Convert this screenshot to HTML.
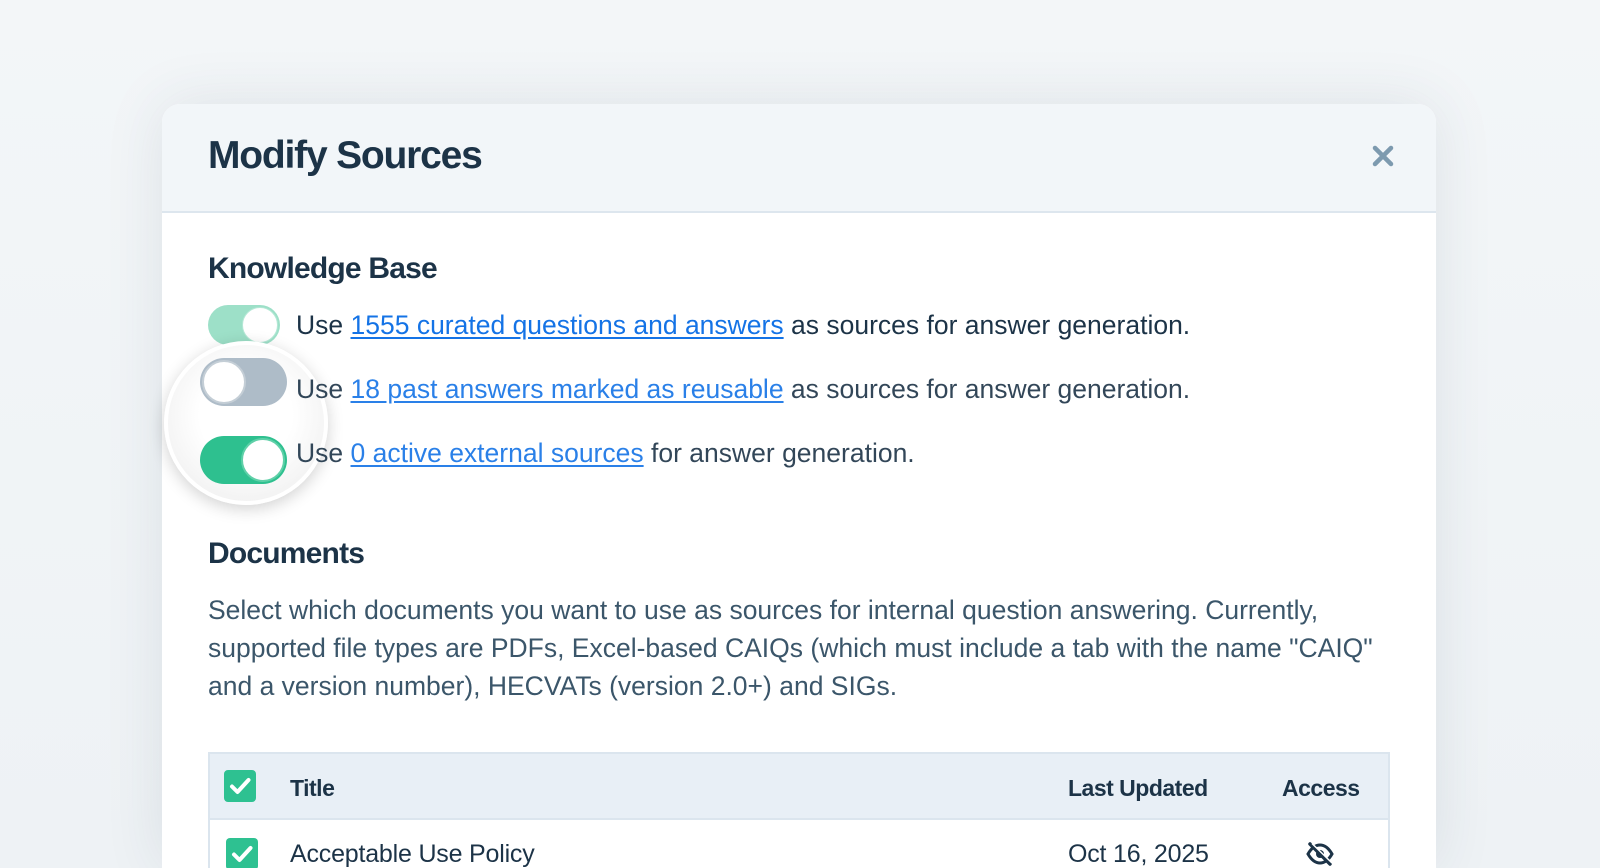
<!DOCTYPE html>
<html><head><meta charset="utf-8"><style>
*{box-sizing:border-box;margin:0;padding:0}
html,body{width:1600px;height:868px;overflow:hidden}
body{background:linear-gradient(180deg,#f3f6f8 0%,#eef2f5 100%);font-family:"Liberation Sans",Arial,sans-serif;color:#1c3347;position:relative}
.modal{position:absolute;left:162px;top:104px;width:1274px;height:764px;background:#fff;border-radius:18px 18px 0 0;box-shadow:0 0 60px rgba(40,60,80,.10);overflow:hidden}
.hdr{height:109px;background:#f2f6f9;border-bottom:2px solid #dde6ee;position:relative}
.hdr h1{position:absolute;left:46px;top:30px;font-size:39px;font-weight:700;letter-spacing:-1.2px;color:#1c3347}
.x{position:absolute;left:1210px;top:41px}
h2{position:absolute;left:46px;font-size:30px;font-weight:700;letter-spacing:-.8px;color:#1c3347}
.row{position:absolute;left:134px;font-size:26.5px;letter-spacing:0;white-space:nowrap;color:#1c3347;z-index:3}
.row a{color:#1473e6;text-decoration:underline;text-underline-offset:3px}
.tg{position:absolute;border-radius:30px}
.tg .k{position:absolute;top:2px;background:#fff;border-radius:50%}
.para{position:absolute;left:46px;top:487px;width:1168px;font-size:26.5px;line-height:38px;color:#3b566a;letter-spacing:0}
.tbl{position:absolute;left:46px;top:648px;width:1182px;height:116px;border:2px solid #dbe5ee;border-bottom:none;overflow:hidden}
.th{height:66px;background:#e8eff6;border-bottom:2px solid #dbe5ee;position:relative}
.cb{position:absolute;width:32px;height:32px;border-radius:4px;background:#2ec191}
.tt{position:absolute;font-size:23px;font-weight:700;letter-spacing:-.5px;color:#1c3347}
.td{position:absolute;font-size:25px;letter-spacing:-.2px;color:#1c3347}
.mag{position:absolute;left:164px;top:341px;width:164px;height:164px;border-radius:50%;background:radial-gradient(circle at 50% 45%,#fff 40%,#f1f1f1 80%,#e6e6e6 100%);border:4px solid rgba(255,255,255,.95);box-shadow:0 4px 16px rgba(0,0,0,.18);z-index:2}
.tg.z{z-index:4}
</style></head><body>
<div class="modal">
 <div class="hdr"><h1>Modify Sources</h1>
  <svg class="x" width="22" height="22" viewBox="0 0 22 22"><path d="M3 3L19 19M19 3L3 19" stroke="#7d9aaf" stroke-width="4.5" stroke-linecap="round"/></svg>
 </div>
 <h2 style="top:148px">Knowledge Base</h2>
 <div class="tg" style="left:46px;top:201px;width:72px;height:40px;background:#9de0c8"><div class="k" style="left:34px;width:36px;height:36px;border:1px solid #b5e8d6"></div></div>
 <div class="row" style="top:206px">Use <a>1555 curated questions and answers</a> as sources for answer generation.</div>
 <div class="row" style="top:270px;opacity:.9">Use <a>18 past answers marked as reusable</a> as sources for answer generation.</div>
 <div class="row" style="top:334px;opacity:.9">Use <a>0 active external sources</a> for answer generation.</div>
 <h2 style="top:433px">Documents</h2>
 <div class="para">Select which documents you want to use as sources for internal question answering. Currently, supported file types are PDFs, Excel-based CAIQs (which must include a tab with the name "CAIQ" and a version number), HECVATs (version 2.0+) and SIGs.</div>
 <div class="tbl">
  <div class="th">
   <div class="cb" style="left:14px;top:16px"><svg width="32" height="32" viewBox="0 0 32 32"><path d="M8 16.5l5.5 5.5L24.5 10" fill="none" stroke="#fff" stroke-width="4" stroke-linecap="round" stroke-linejoin="round"/></svg></div>
   <div class="tt" style="left:80px;top:21px">Title</div>
   <div class="tt" style="left:858px;top:21px">Last Updated</div>
   <div class="tt" style="left:1072px;top:21px">Access</div>
  </div>
  <div class="cb" style="left:16px;top:84px"><svg width="32" height="32" viewBox="0 0 32 32"><path d="M8 16.5l5.5 5.5L24.5 10" fill="none" stroke="#fff" stroke-width="4" stroke-linecap="round" stroke-linejoin="round"/></svg></div>
  <div class="td" style="left:80px;top:86px">Acceptable Use Policy</div>
  <div class="td" style="left:858px;top:86px">Oct 16, 2025</div>
  <svg style="position:absolute;left:1096px;top:88px" width="28" height="24" viewBox="0 0 28 24"><path d="M2 12C6 5 10 3 14 3s8 2 12 9c-4 7-8 9-12 9S6 19 2 12z" fill="none" stroke="#1c3347" stroke-width="3"/><circle cx="14" cy="12" r="4" fill="#1c3347"/><path d="M4 2L24 22" stroke="#1c3347" stroke-width="3.5" stroke-linecap="round"/><path d="M6 1.5L26 21" stroke="#fff" stroke-width="1.5"/></svg>
 </div>
</div>
<div class="mag"></div>
<div class="tg z" style="left:200px;top:358px;width:87px;height:48px;background:#aebcc8"><div class="k" style="left:2px;width:44px;height:44px;border:2px solid #c4ced6"></div></div>
<div class="tg z" style="left:200px;top:436px;width:87px;height:48px;background:#2ec08f"><div class="k" style="left:41px;width:44px;height:44px;border:2px solid #5fd0a8"></div></div>
</body></html>
